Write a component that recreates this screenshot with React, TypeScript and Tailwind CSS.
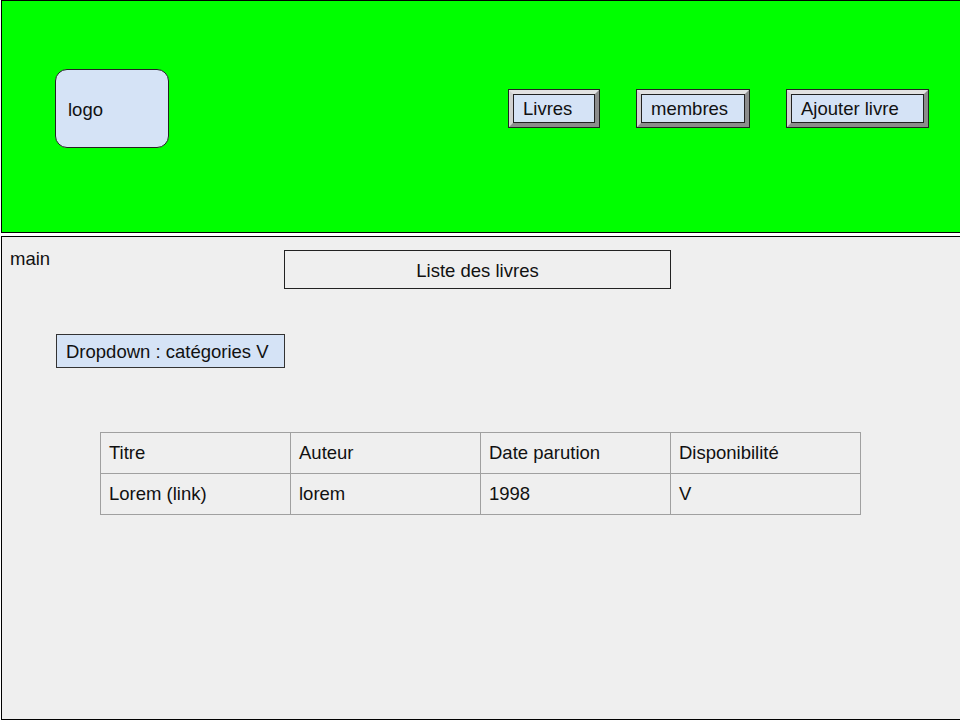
import React from 'react'

type NavProps = { label: string; width: string }

function NavButton({ label, width }: NavProps) {
  return (
    <div className={`${width} h-[39px] border border-[#222]`}>
      <div className='h-full w-full border-t-[4px] border-l-[4px] border-r-[4px] border-b-[4px] border-t-[#e2e2e2] border-l-[#d0d0d0] border-r-[#8c8c8c] border-b-[#8c8c8c]'>
        <div className='h-full w-full border border-[#222] bg-[#d5e3f6] flex items-center pl-[9px] pt-[1px] text-[18.5px] leading-none text-[#111]'>
          {label}
        </div>
      </div>
    </div>
  )
}

const headers = ['Titre', 'Auteur', 'Date parution', 'Disponibilité']
const rows = [['Lorem (link)', 'lorem', '1998', 'V']]

export default function App() {
  return (
    <div className='w-[960px] h-[720px] overflow-hidden bg-white text-[#111]' style={{ fontFamily: '"Liberation Sans", Arial, sans-serif' }}>
      <header className='ml-[1px] h-[233px] bg-[#00ff00] border-t border-l border-b border-black flex items-center pb-[16px]'>
        <div className='ml-[53px] w-[114px] h-[79px] rounded-[12px] border border-[#222] bg-[#d5e3f6] flex items-center pl-[12px] pt-[2px] text-[18.5px]'>
          logo
        </div>
        <nav className='ml-auto mr-[31px] flex items-center gap-[36px]'>
          <NavButton label='Livres' width='w-[92px]' />
          <NavButton label='membres' width='w-[114px]' />
          <NavButton label='Ajouter livre' width='w-[143px]' />
        </nav>
      </header>

      <main className='ml-[1px] mt-[3px] h-[484px] bg-[#efefef] border-t border-l border-b border-black'>
        <div className='flex items-start'>
          <span className='mt-[11px] pl-[8px] w-[282px] shrink-0 text-[18.5px] leading-[21px]'>main</span>
          <div className='mt-[13px] w-[387px] h-[39px] border border-[#222] flex items-center justify-center pt-[2px] text-[18.5px]'>
            Liste des livres
          </div>
        </div>

        <div className='mt-[45px] ml-[54px] w-[229px] h-[34px] border border-[#333] bg-[#d5e3f6] flex items-center pl-[9px] pt-[1px] text-[18.5px]'>
          Dropdown : catégories V
        </div>

        <div className='mt-[64px] ml-[98px] w-[761px] grid grid-cols-4 border-t border-l border-[#a0a0a0]'>
          {headers.map((h) => (
            <div key={h} className='h-[41px] border-r border-b border-[#a0a0a0] flex items-center pl-[8px] text-[18.5px]'>
              {h}
            </div>
          ))}
          {rows.map((r) =>
            r.map((c, i) => (
              <div key={i} className='h-[41px] border-r border-b border-[#a0a0a0] flex items-center pl-[8px] text-[18.5px]'>
                {c}
              </div>
            ))
          )}
        </div>
      </main>
    </div>
  )
}
